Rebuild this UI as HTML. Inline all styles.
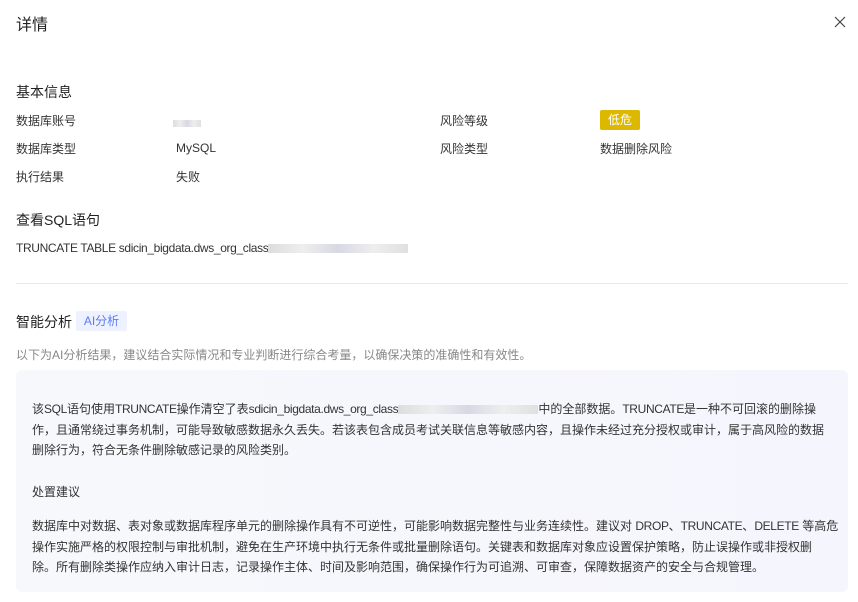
<!DOCTYPE html>
<html><head><meta charset="utf-8"><style>
*{margin:0;padding:0;box-sizing:border-box}
body{width:858px;height:602px;background:#fff;font-family:"Liberation Sans","Noto Sans CJK SC",sans-serif;color:#333;position:relative;overflow:hidden;font-size:12px}
.a{position:absolute;white-space:nowrap}
.n{letter-spacing:-0.35px}
.blur{display:inline-block;height:9px;background:linear-gradient(90deg,#ddd,#eee,#d8d8e4,#eee,#e0e0e0);vertical-align:middle}
</style></head><body>
<div class="a" style="left:16px;top:11px;font-size:16px;color:#222">详情</div>
<svg class="a" style="left:834px;top:16px" width="12" height="12" viewBox="0 0 12 12"><path d="M1 1L11 11M11 1L1 11" stroke="#444" stroke-width="1.2"/></svg>
<div class="a" style="left:16px;top:82px;font-size:14px;color:#222">基本信息</div>
<div class="a" style="left:16px;top:112px">数据库账号</div>
<div class="a" style="left:173px;top:116px"><span class="blur" style="width:28px;height:7px"></span></div>
<div class="a" style="left:16px;top:140px">数据库类型</div>
<div class="a" style="left:176px;top:141px">MySQL</div>
<div class="a" style="left:16px;top:168px">执行结果</div>
<div class="a" style="left:176px;top:168px">失败</div>
<div class="a" style="left:440px;top:112px">风险等级</div>
<div class="a" style="left:600px;top:110px;width:40px;height:20px;background:#dcb800;border-radius:2px;color:#fff;text-align:center;line-height:20px">低危</div>
<div class="a" style="left:440px;top:140px">风险类型</div>
<div class="a" style="left:600px;top:140px">数据删除风险</div>
<div class="a" style="left:16px;top:210px;font-size:14px;color:#222">查看SQL语句</div>
<div class="a" style="left:16px;top:241px"><span class="n">TRUNCATE TABLE sdicin_bigdata.dws_org_class</span><span class="blur" style="width:140px"></span></div>
<div class="a" style="left:16px;top:283px;width:832px;height:1px;background:#e8e8e8"></div>
<div class="a" style="left:16px;top:312px;font-size:14px;color:#222">智能分析</div>
<div class="a" style="left:76px;top:311px;width:51px;height:20px;background:#eef1ff;color:#5b7cf7;border-radius:2px;text-align:center;line-height:20px;font-size:12px">AI分析</div>
<div class="a" style="left:16px;top:346px;color:#888">以下为AI分析结果，建议结合实际情况和专业判断进行综合考量，以确保决策的准确性和有效性。</div>
<div class="a" style="left:16px;top:370px;width:832px;height:222px;background:linear-gradient(90deg,#f7f8fc,#f5f6fd);border-radius:6px"></div>
<div class="a" style="left:32px;top:399px;line-height:20.5px">该<span class="n">SQL</span>语句使用<span class="n">TRUNCATE</span>操作清空了表<span class="n">sdicin_bigdata.dws_org_class</span><span class="blur" style="width:140px"></span>中的全部数据。<span class="n">TRUNCATE</span>是一种不可回滚的删除操<br>作，且通常绕过事务机制，可能导致敏感数据永久丢失。若该表包含成员考试关联信息等敏感内容，且操作未经过充分授权或审计，属于高风险的数据<br>删除行为，符合无条件删除敏感记录的风险类别。</div>
<div class="a" style="left:32px;top:483px">处置建议</div>
<div class="a" style="left:32px;top:516px;line-height:20.5px">数据库中对数据、表对象或数据库程序单元的删除操作具有不可逆性，可能影响数据完整性与业务连续性。建议对 <span class="n">DROP</span>、<span class="n">TRUNCATE</span>、<span class="n">DELETE</span> 等高危<br>操作实施严格的权限控制与审批机制，避免在生产环境中执行无条件或批量删除语句。关键表和数据库对象应设置保护策略，防止误操作或非授权删<br>除。所有删除类操作应纳入审计日志，记录操作主体、时间及影响范围，确保操作行为可追溯、可审查，保障数据资产的安全与合规管理。</div>
</body></html>
